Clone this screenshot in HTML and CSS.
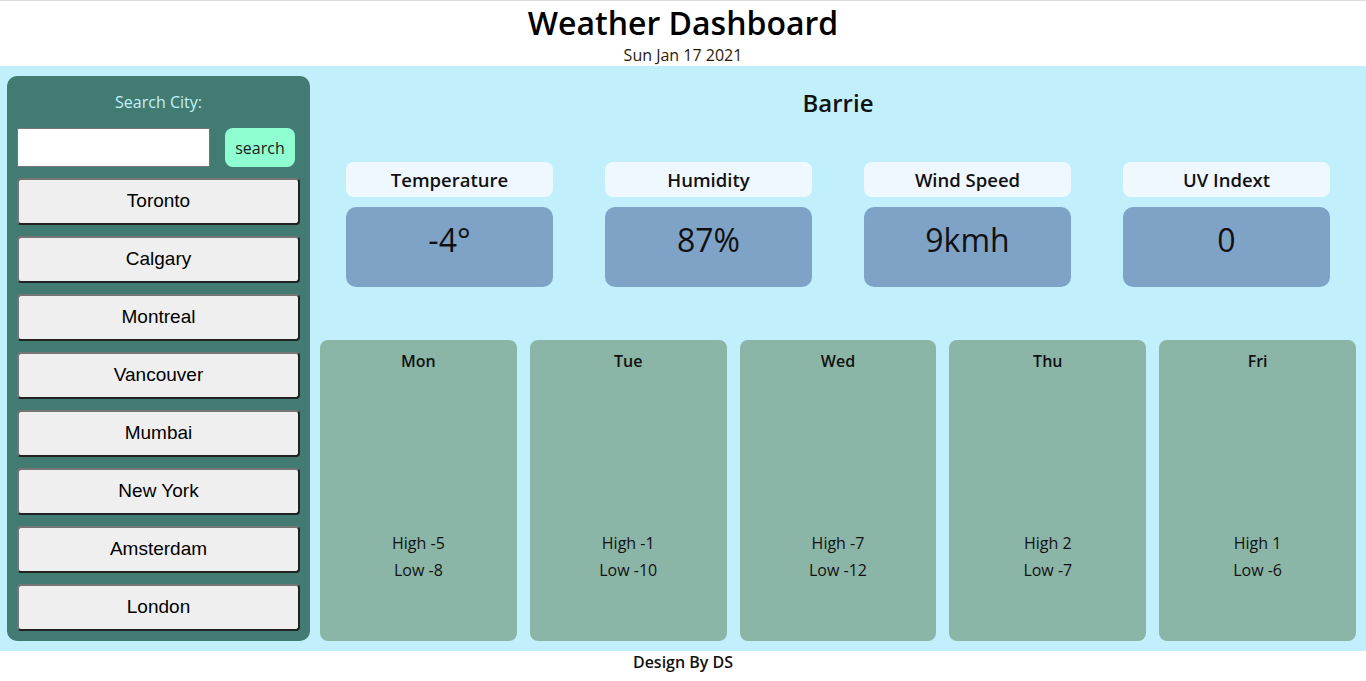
FILE: index.html
```html
<!DOCTYPE html>
<html lang="en">
<head>
<meta charset="utf-8">
<title>Weather Dashboard</title>
<link rel="stylesheet" href="styles.css">
</head>
<body>
<header class="header">
  <h1 class="title">Weather Dashboard</h1>
  <div class="date">Sun Jan 17 2021</div>
</header>
<main class="main">
  <aside class="sidebar">
    <div class="search-label">Search City:</div>
    <div class="search-row">
      <input class="search-input" type="text">
      <button class="search-btn">search</button>
    </div>
    <button class="city">Toronto</button>
    <button class="city">Calgary</button>
    <button class="city">Montreal</button>
    <button class="city">Vancouver</button>
    <button class="city">Mumbai</button>
    <button class="city">New York</button>
    <button class="city">Amsterdam</button>
    <button class="city">London</button>
  </aside>
  <section class="content">
    <h2 class="city-name">Barrie</h2>
    <div class="stats">
      <div class="stat">
        <div class="stat-label">Temperature</div>
        <div class="stat-value">-4°</div>
      </div>
      <div class="stat">
        <div class="stat-label">Humidity</div>
        <div class="stat-value">87%</div>
      </div>
      <div class="stat">
        <div class="stat-label">Wind Speed</div>
        <div class="stat-value">9kmh</div>
      </div>
      <div class="stat">
        <div class="stat-label">UV Indext</div>
        <div class="stat-value">0</div>
      </div>
    </div>
    <div class="forecast">
      <div class="day"><div class="day-name">Mon</div><div class="temps"><div>High -5</div><div>Low -8</div></div></div>
      <div class="day"><div class="day-name">Tue</div><div class="temps"><div>High -1</div><div>Low -10</div></div></div>
      <div class="day"><div class="day-name">Wed</div><div class="temps"><div>High -7</div><div>Low -12</div></div></div>
      <div class="day"><div class="day-name">Thu</div><div class="temps"><div>High 2</div><div>Low -7</div></div></div>
      <div class="day"><div class="day-name">Fri</div><div class="temps"><div>High 1</div><div>Low -6</div></div></div>
    </div>
  </section>
</main>
<footer class="footer">Design By DS</footer>
</body>
</html>
```
FILE: styles.css
```css
* { box-sizing: border-box; }
html, body { margin: 0; padding: 0; }
body {
  font-family: "Open Sans", "Noto Sans", sans-serif;
  color: #111;
  background: #fff;
  border-top: 1px solid #dcdcdc;
}
.header {
  height: 65px;
  text-align: center;
}
.title {
  margin: 0;
  font-size: 32px;
  font-weight: 600;
  line-height: 43px;
  color: #000;
}
.date {
  font-size: 16px;
  line-height: 23px;
  color: #2a1a08;
}
.main {
  display: flex;
  gap: 10px;
  background: #c1f0fc;
  padding: 10px 10px 10px 7px;
  height: 585px;
}
.sidebar {
  width: 303px;
  flex: none;
  background: #417b71;
  border-radius: 10px;
  padding: 15px 10px 10px 10px;
  display: flex;
  flex-direction: column;
}
.search-label {
  text-align: center;
  color: #c1f0fc;
  font-size: 16px;
  line-height: 22px;
  margin-bottom: 15px;
}
.search-row {
  display: flex;
  gap: 15px;
  margin-bottom: 11px;
}
.search-input {
  width: 193px;
  height: 39px;
  border: 1px solid #767676;
  background: #fff;
  margin: 0;
  padding: 0 4px;
}
.search-btn {
  width: 70px;
  height: 39px;
  border: none;
  border-radius: 8px;
  background: #8fffd2;
  font-family: "Open Sans", sans-serif;
  font-size: 16px;
  color: #1a1a1a;
  padding: 0;
}
.city {
  height: 47px;
  margin: 0 0 11px 0;
  background: #efefef;
  border: 2px solid;
  border-color: #767676 #222 #222 #767676;
  border-radius: 4px;
  font-family: "Liberation Sans", Arial, sans-serif;
  font-size: 19px;
  line-height: 21px;
  color: #000;
  padding: 0 0 2px 0;
}
.city:last-child { margin-bottom: 0; }
.content {
  flex: 1;
  display: flex;
  flex-direction: column;
}
.city-name {
  margin: 0;
  text-align: center;
  font-size: 24px;
  font-weight: 600;
  line-height: 30px;
  padding-top: 12px;
  height: 86px;
}
.stats {
  display: flex;
  justify-content: space-around;
}
.stat {
  width: 207px;
  display: flex;
  flex-direction: column;
  gap: 10px;
}
.stat-label {
  height: 35px;
  line-height: 35px;
  background: #f0f8ff;
  border-radius: 8px;
  text-align: center;
  font-size: 18.5px;
  font-weight: 600;
}
.stat-value {
  height: 80px;
  background: #7fa2c7;
  border-radius: 10px;
  text-align: center;
  font-size: 32px;
  line-height: 43px;
  padding-top: 11px;
}
.forecast {
  margin-top: 53px;
  display: flex;
  gap: 13px;
  flex: 1;
}
.day {
  flex: 1;
  background: #8bb5a6;
  border-radius: 8px;
  text-align: center;
  padding-top: 10px;
}
.day-name {
  font-size: 16px;
  font-weight: 600;
  line-height: 22px;
}
.temps {
  margin-top: 158px;
  font-size: 16px;
  line-height: 27px;
}
.footer {
  text-align: center;
  font-size: 16px;
  font-weight: 600;
  line-height: 22px;
  color: #111;
}
```
